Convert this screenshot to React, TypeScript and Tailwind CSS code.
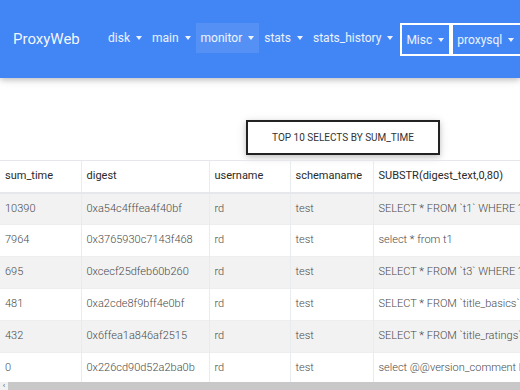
import React from "react";

const Caret = () => (
  <span className="ml-[6px] inline-block w-0 h-0 border-l-[3.5px] border-r-[3.5px] border-t-[4px] border-l-transparent border-r-transparent border-t-white/90" />
);

const NavItem = ({ label, active }: { label: string; active?: boolean }) => (
  <div
    className={`flex items-center h-[30px] px-[5px] ${active ? "bg-white/10" : ""}`}
  >
    <span>{label}</span>
    <Caret />
  </div>
);

const rows = [
  ["10390", "0xa54c4fffea4f40bf", "rd", "test", "SELECT * FROM `t1` WHERE ?"],
  ["7964", "0x3765930c7143f468", "rd", "test", "select * from t1"],
  ["695", "0xcecf25dfeb60b260", "rd", "test", "SELECT * FROM `t3` WHERE ?"],
  ["481", "0xa2cde8f9bff4e0bf", "rd", "test", "SELECT * FROM `title_basics` WHERE ?"],
  ["432", "0x6ffea1a846af2515", "rd", "test", "SELECT * FROM `title_ratings` WHERE ?"],
  ["0", "0x226cd90d52a2ba0b", "rd", "test", "select @@version_comment limit ?"],
];

const headers = ["sum_time", "digest", "username", "schemaname", "SUBSTR(digest_text,0,80)"];
const widths = ["w-[81px]", "w-[128px]", "w-[81px]", "w-[83px]", "w-[260px]"];

export default function App() {
  return (
    <div
      className="w-[520px] h-[390px] overflow-hidden bg-white flex flex-col"
      style={{ fontFamily: "Roboto, 'Noto Sans', sans-serif" }}
    >
      <nav className="h-[78px] shrink-0 bg-[#4285f4] flex items-start text-white shadow-[0_2px_5px_0_rgba(0,0,0,0.16),0_2px_10px_0_rgba(0,0,0,0.12)] relative z-10">
        <div className="ml-[13px] mt-[29px] text-[15px] leading-[20px] w-[90px] shrink-0 text-white/95">ProxyWeb</div>
        <div className="flex items-start mt-[23px] text-[12px] text-white/90">
          <NavItem label="disk" />
          <NavItem label="main" />
          <NavItem label="monitor" active />
          <NavItem label="stats" />
          <NavItem label="stats_history" />
          <div className="flex ml-[2px]">
            <div className="flex items-center h-[33px] px-[4px] pr-[5px] border-2 border-white">
              <span>Misc</span>
              <Caret />
            </div>
            <div className="flex items-center h-[33px] px-[4px] pr-[12px] border-2 border-white">
              <span>proxysql</span>
              <Caret />
            </div>
          </div>
        </div>
      </nav>

      <div className="flex justify-start mt-[42px] pl-[246px]">
        <div className="w-[194px] h-[35px] border-2 border-[#222] bg-white flex items-center justify-center text-[10px] text-[#333] uppercase shadow-[0_2px_5px_0_rgba(0,0,0,0.16),0_2px_10px_0_rgba(0,0,0,0.12)]">
          Top 10 selects by sum_time
        </div>
      </div>

      <div className="mt-[5px] overflow-hidden flex-1 min-h-0">
        <table className="table-fixed border-collapse w-[633px] text-[11px] whitespace-nowrap">
          <thead>
            <tr className="h-[32px] border-t border-b-2 border-[#e5e7ea]">
              {headers.map((h, i) => (
                <th
                  key={h}
                  className={`${widths[i]} text-left font-normal text-[#2a2a2a] px-[5px] ${i > 0 ? "border-l border-[#e9ecef]" : ""}`}
                >
                  {h}
                </th>
              ))}
            </tr>
          </thead>
          <tbody>
            {rows.map((r, ri) => (
              <tr
                key={ri}
                className={`h-[32px] border-b border-[#eceef0] ${ri % 2 === 0 ? "bg-[#f2f2f2]" : "bg-white"}`}
              >
                {r.map((c, ci) => (
                  <td
                    key={ci}
                    className={`px-[5px] font-light text-[#4a4a4a] overflow-hidden ${ci > 0 ? "border-l border-[#e9ecef]" : ""}`}
                  >
                    {c}
                  </td>
                ))}
              </tr>
            ))}
          </tbody>
        </table>
      </div>

      <div className="h-[8px] shrink-0 flex bg-[#f1f1f1]">
        <div className="w-[8px] flex items-center justify-center text-[8px] leading-none text-[#505050]">‹</div>
        <div className="flex-1 bg-[#c8c8c8]" />
      </div>
    </div>
  );
}
